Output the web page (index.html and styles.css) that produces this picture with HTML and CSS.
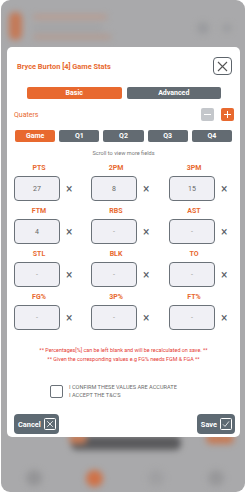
FILE: index.html
```html
<!DOCTYPE html>
<html lang="en">
<head>
    <meta charset="UTF-8">
    <meta name="viewport" content="width=device-width, initial-scale=1.0">
    <title>Game Stats</title>
    <link rel="stylesheet" href="styles.css">
</head>
<body>
    <div class="screen">
        <!-- blurred app behind the dialog -->
        <div class="backdrop">
            <div class="blob blob-avatar"></div>
            <div class="blob blob-line l1"></div>
            <div class="blob blob-line l2"></div>
            <div class="blob blob-line l3"></div>
            <div class="blob blob-dot d1"></div>
            <div class="blob blob-dot d2"></div>
            <div class="blob blob-bar"></div>
            <div class="blob blob-bar-end e1"></div>
            <div class="blob blob-bar-end e2"></div>
            <div class="blob blob-nav n1"></div>
            <div class="blob blob-nav n2"></div>
            <div class="blob blob-nav n3"></div>
            <div class="blob blob-nav n4"></div>
        </div>

        <div class="modal">
            <div class="modal-header">
                <h2>Bryce Burton [4] Game Stats</h2>
                <button class="close-btn" type="button">
                    <svg width="11" height="11" viewBox="0 0 11 11"><path d="M1 1L10 10M10 1L1 10" stroke="#555" stroke-width="1.1" fill="none"/></svg>
                </button>
            </div>

            <div class="mode-tabs">
                <button class="mode-tab active">Basic</button>
                <button class="mode-tab">Advanced</button>
            </div>

            <div class="quarters-row">
                <span class="quarters-label">Quaters</span>
                <div class="step-btns">
                    <button class="step-btn minus"><span></span></button>
                    <button class="step-btn plus"><span></span><span class="v"></span></button>
                </div>
            </div>

            <div class="period-tabs">
                <button class="period-tab active">Game</button>
                <button class="period-tab">Q1</button>
                <button class="period-tab">Q2</button>
                <button class="period-tab">Q3</button>
                <button class="period-tab">Q4</button>
            </div>

            <p class="scroll-hint">Scroll to view more fields</p>

            <div class="stats-grid">
                <div class="stat"><label>PTS</label><div class="stat-row"><div class="stat-box">27</div><span class="clear">&times;</span></div></div>
                <div class="stat"><label>2PM</label><div class="stat-row"><div class="stat-box">8</div><span class="clear">&times;</span></div></div>
                <div class="stat"><label>3PM</label><div class="stat-row"><div class="stat-box">15</div><span class="clear">&times;</span></div></div>
                <div class="stat"><label>FTM</label><div class="stat-row"><div class="stat-box">4</div><span class="clear">&times;</span></div></div>
                <div class="stat"><label>RBS</label><div class="stat-row"><div class="stat-box empty">-</div><span class="clear">&times;</span></div></div>
                <div class="stat"><label>AST</label><div class="stat-row"><div class="stat-box empty">-</div><span class="clear">&times;</span></div></div>
                <div class="stat"><label>STL</label><div class="stat-row"><div class="stat-box empty">-</div><span class="clear">&times;</span></div></div>
                <div class="stat"><label>BLK</label><div class="stat-row"><div class="stat-box empty">-</div><span class="clear">&times;</span></div></div>
                <div class="stat"><label>TO</label><div class="stat-row"><div class="stat-box empty">-</div><span class="clear">&times;</span></div></div>
                <div class="stat"><label>FG%</label><div class="stat-row"><div class="stat-box empty">-</div><span class="clear">&times;</span></div></div>
                <div class="stat"><label>3P%</label><div class="stat-row"><div class="stat-box empty">-</div><span class="clear">&times;</span></div></div>
                <div class="stat"><label>FT%</label><div class="stat-row"><div class="stat-box empty">-</div><span class="clear">&times;</span></div></div>
            </div>

            <div class="notes">
                <p>** Percentages[%] can be left blank and will be recalculated on save. **</p>
                <p>** Given the corresponding values e.g FG% needs FGM &amp; FGA **</p>
            </div>

            <div class="confirm">
                <span class="checkbox"></span>
                <div class="confirm-text">
                    <div>I CONFIRM THESE VALUES ARE ACCURATE</div>
                    <div>I ACCEPT THE T&amp;C'S</div>
                </div>
            </div>

            <div class="actions">
                <button class="action-btn">Cancel
                    <svg width="12" height="12" viewBox="0 0 12 12"><rect x="0.5" y="0.5" width="11" height="11" rx="1" stroke="#fff" fill="none"/><path d="M3.2 3.2L8.8 8.8M8.8 3.2L3.2 8.8" stroke="#fff" stroke-width="0.8"/></svg>
                </button>
                <button class="action-btn">Save
                    <svg width="12" height="12" viewBox="0 0 12 12"><rect x="0.5" y="0.5" width="11" height="11" rx="1" stroke="#fff" fill="none"/><path d="M3 6.4L5 8.4L9 3.4" stroke="#fff" stroke-width="0.8" fill="none"/></svg>
                </button>
            </div>
        </div>
    </div>
</body>
</html>
```
FILE: styles.css
```css
body {
    margin: 0;
    padding: 0;
    background-color: #fff;
    font-family: Roboto, "Liberation Sans", Arial, sans-serif;
}

button {
    font-family: inherit;
    border: none;
    padding: 0;
    cursor: pointer;
}

.screen {
    position: relative;
    width: 244px;
    height: 492px;
    margin-left: 1px;
    background-color: #a9a9ab;
    border-radius: 9px;
    overflow: hidden;
}

/* blurred page underneath */
.backdrop {
    position: absolute;
    inset: 0;
    filter: blur(3px);
}

.blob {
    position: absolute;
}

.blob-avatar {
    left: 8px;
    top: 12px;
    width: 13px;
    height: 28px;
    border-radius: 6px;
    background-color: #c47a58;
}

.blob-line {
    left: 32px;
    height: 4px;
    border-radius: 2px;
}

.l1 { top: 15px; width: 74px; background-color: #bb988a; }
.l2 { top: 26px; width: 70px; background-color: #a0a0a2; }
.l3 { top: 35px; width: 78px; background-color: #b4978b; }

.blob-dot {
    top: 22px;
    width: 12px;
    height: 12px;
    border-radius: 50%;
    background-color: #9a9b9e;
}

.d1 { left: 196px; }
.d2 { left: 222px; width: 8px; height: 8px; top: 24px; }

.blob-bar {
    left: 70px;
    top: 436px;
    width: 110px;
    height: 14px;
    border-radius: 6px;
    background-color: #5a5a5c;
}

.blob-bar-end {
    top: 434px;
    height: 10px;
    border-radius: 5px;
    background-color: #c67b56;
}

.e1 { left: 68px; width: 18px; }
.e2 { left: 205px; width: 28px; }

.blob-nav {
    top: 470px;
    width: 16px;
    height: 16px;
    border-radius: 50%;
    background-color: #959597;
}

.n1 { left: 25px; }
.n2 { left: 85px; width: 17px; height: 17px; background-color: #cf7248; }
.n3 { left: 147px; background-color: #a0a0a2; }
.n4 { left: 207px; background-color: #98989a; }

/* dialog */
.modal {
    position: absolute;
    left: 6px;
    top: 47px;
    width: 233px;
    height: 390px;
    background-color: #fff;
    border-radius: 5px;
    box-sizing: border-box;
}

.modal-header {
    display: flex;
    align-items: center;
    justify-content: space-between;
    padding: 10px 8px 0 10px;
}

.modal-header h2 {
    margin: 0;
    font-size: 7.4px;
    font-weight: bold;
    color: #e8692f;
}

.close-btn {
    width: 19px;
    height: 18px;
    border: 1px solid #5d646b;
    border-radius: 4px;
    background-color: #fff;
    display: flex;
    align-items: center;
    justify-content: center;
}

.mode-tabs {
    display: flex;
    gap: 5px;
    padding: 12px 19px 0 20px;
}

.mode-tab {
    flex: 1;
    height: 12px;
    border-radius: 2px;
    background-color: #636b72;
    color: #fff;
    font-size: 7px;
    font-weight: bold;
}

.mode-tab.active {
    background-color: #e8692f;
}

.quarters-row {
    display: flex;
    align-items: center;
    justify-content: space-between;
    padding: 9px 6px 0 7px;
}

.quarters-label {
    color: #e8692f;
    font-size: 7px;
}

.step-btns {
    display: flex;
    gap: 7px;
}

.step-btn {
    position: relative;
    width: 13px;
    height: 13px;
    border-radius: 2px;
    background-color: #c4c7cb;
}

.step-btn.plus {
    background-color: #e8692f;
}

.step-btn span {
    position: absolute;
    left: 3px;
    top: 6px;
    width: 7px;
    height: 1px;
    background-color: #fff;
}

.step-btn span.v {
    left: 6px;
    top: 3px;
    width: 1px;
    height: 7px;
}

.period-tabs {
    display: flex;
    gap: 4px;
    padding: 9px 8px 0 8px;
}

.period-tab {
    flex: 1;
    height: 12px;
    border-radius: 2px;
    background-color: #636b72;
    color: #fff;
    font-size: 7px;
    font-weight: bold;
}

.period-tab.active {
    background-color: #e8692f;
}

.scroll-hint {
    margin: 8px 0 0;
    text-align: center;
    font-size: 5.6px;
    color: #777;
}

.stats-grid {
    display: grid;
    grid-template-columns: 77px 78px 1fr;
    row-gap: 6px;
    padding: 8px 6px 0 7px;
}

.stat label {
    display: block;
    width: 50px;
    text-align: center;
    color: #e8692f;
    font-size: 7px;
    font-weight: bold;
    line-height: 8px;
    margin-bottom: 4px;
}

.stat-row {
    display: flex;
    align-items: center;
}

.stat-box {
    width: 46px;
    height: 25px;
    box-sizing: border-box;
    border: 1.3px solid #6b7279;
    border-radius: 4px;
    background-color: #f0f0f5;
    display: flex;
    align-items: center;
    justify-content: center;
    font-size: 7px;
    color: #666;
}

.stat-box.empty {
    color: #999;
}

.clear {
    margin-left: 6px;
    font-size: 12px;
    line-height: 12px;
    color: #5a6067;
}

.notes {
    padding-top: 16px;
    text-align: center;
}

.notes p {
    margin: 0;
    font-size: 5.4px;
    line-height: 9px;
    color: #e53a33;
}

.confirm {
    display: flex;
    align-items: center;
    gap: 6px;
    padding: 19px 0 0 43px;
}

.checkbox {
    width: 13px;
    height: 13px;
    box-sizing: border-box;
    border: 1px solid #6b7279;
    border-radius: 2px;
}

.confirm-text {
    font-size: 5.6px;
    line-height: 8px;
    color: #6b6b6b;
}

.actions {
    display: flex;
    justify-content: space-between;
    padding: 15px 5px 0 7px;
}

.action-btn {
    display: flex;
    align-items: center;
    gap: 3px;
    height: 20px;
    padding: 0 3px 0 4px;
    border-radius: 4px;
    background-color: #5e6a73;
    color: #fff;
    font-size: 7.4px;
    font-weight: bold;
}
```
